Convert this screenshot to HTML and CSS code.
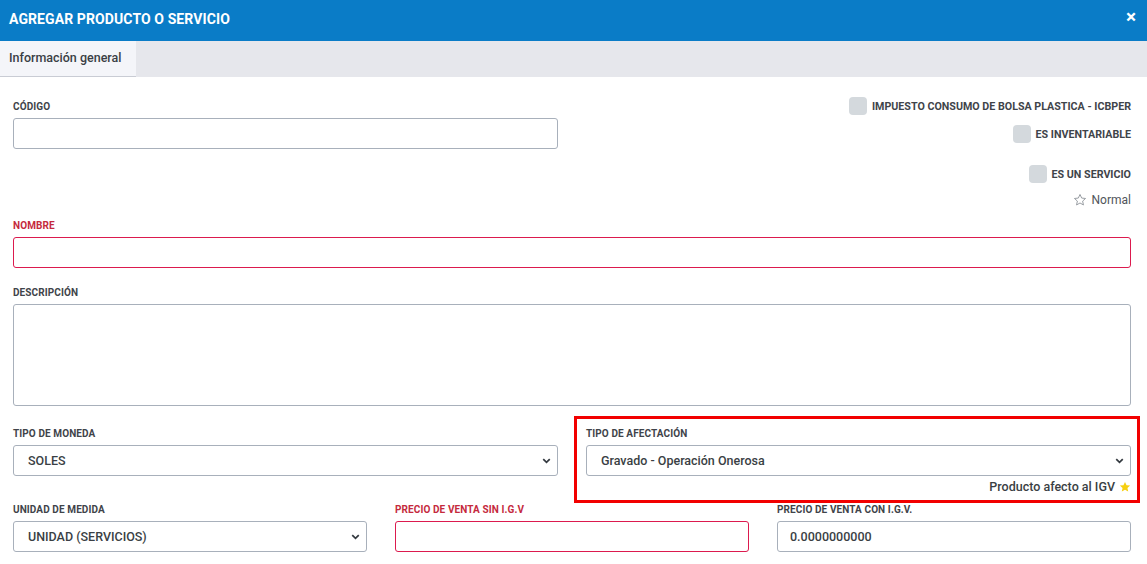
FILE: index.html
```html
<!DOCTYPE html>
<html lang="es">
<head>
    <meta charset="UTF-8">
    <title>Agregar producto o servicio</title>
    <link rel="stylesheet" href="styles.css">
</head>
<body>
    <div class="modal-header">
        <span class="modal-title">AGREGAR PRODUCTO O SERVICIO</span>
        <span class="close">&times;</span>
    </div>

    <div class="tabs">
        <div class="tab active">Información general</div>
    </div>

    <div class="form">
        <div class="row row-2 first-row">
            <div class="field">
                <label class="label">CÓDIGO</label>
                <div class="input"></div>
            </div>
            <div class="checks">
                <div class="check check-1"><span class="box"></span>IMPUESTO CONSUMO DE BOLSA PLASTICA - ICBPER</div>
                <div class="check check-2"><span class="box"></span>ES INVENTARIABLE</div>
                <div class="check check-3"><span class="box"></span>ES UN SERVICIO</div>
                <div class="normal">
                    <svg class="star-outline" width="14" height="14" viewBox="0 0 24 24"><path d="M12 2.5l2.9 6.2 6.6.7-5 4.5 1.4 6.6L12 17.1l-5.9 3.4 1.4-6.6-5-4.5 6.6-.7z" fill="none" stroke="#8c9197" stroke-width="1.5" stroke-linejoin="round"/></svg>
                    <span>Normal</span>
                </div>
            </div>
        </div>

        <div class="field nombre">
            <label class="label required">NOMBRE</label>
            <div class="input input-required"></div>
        </div>

        <div class="field descripcion">
            <label class="label">DESCRIPCIÓN</label>
            <div class="input textarea"></div>
        </div>

        <div class="row row-2">
            <div class="field">
                <label class="label">TIPO DE MONEDA</label>
                <div class="input select">
                    <span>SOLES</span>
                    <svg class="chevron" width="9" height="6" viewBox="0 0 10 7"><path d="M1.2 1.3l3.8 3.8 3.8-3.8" fill="none" stroke="#343a40" stroke-width="2"/></svg>
                </div>
            </div>
            <div class="field highlighted">
                <label class="label">TIPO DE AFECTACIÓN</label>
                <div class="input select">
                    <span>Gravado - Operación Onerosa</span>
                    <svg class="chevron" width="9" height="6" viewBox="0 0 10 7"><path d="M1.2 1.3l3.8 3.8 3.8-3.8" fill="none" stroke="#343a40" stroke-width="2"/></svg>
                </div>
                <div class="hint">Producto afecto al IGV
                    <svg class="star" width="12" height="12" viewBox="0 0 24 24"><path d="M12 1.8l3.1 6.6 7.2.8-5.4 4.9 1.5 7.1L12 17.6l-6.4 3.6 1.5-7.1-5.4-4.9 7.2-.8z" fill="#f6cf10"/></svg>
                </div>
            </div>
        </div>

        <div class="row row-3">
            <div class="field">
                <label class="label">UNIDAD DE MEDIDA</label>
                <div class="input select">
                    <span>UNIDAD (SERVICIOS)</span>
                    <svg class="chevron" width="9" height="6" viewBox="0 0 10 7"><path d="M1.2 1.3l3.8 3.8 3.8-3.8" fill="none" stroke="#343a40" stroke-width="2"/></svg>
                </div>
            </div>
            <div class="field">
                <label class="label required">PRECIO DE VENTA SIN I.G.V</label>
                <div class="input input-required"></div>
            </div>
            <div class="field">
                <label class="label">PRECIO DE VENTA CON I.G.V.</label>
                <div class="input value"><span>0.0000000000</span></div>
            </div>
        </div>
    </div>
</body>
</html>
```

FILE: styles.css
```css
body {
    font-family: Roboto, "Liberation Sans", Arial, sans-serif;
    margin: 0;
    padding: 0;
    background-color: #ffffff;
    color: #3c4147;
}

.modal-header {
    height: 41px;
    background-color: #0a7cc7;
    color: white;
    display: flex;
    align-items: center;
    justify-content: space-between;
    padding: 0 11px 0 9px;
    box-sizing: border-box;
}

.modal-title {
    font-size: 14px;
    font-weight: bold;
    letter-spacing: 0.1px;
    margin-top: -4px;
}

.close {
    font-size: 19px;
    font-weight: bold;
    line-height: 1;
    margin-top: -8px;
}

.tabs {
    height: 36px;
    background-color: #e6e7ec;
    display: flex;
}

.tab {
    padding: 0 0 2px 9px;
    font-size: 12.5px;
    font-weight: 500;
    color: #3a3f45;
    display: flex;
    align-items: center;
    box-sizing: border-box;
}

.tab.active {
    background-color: #f4f5f9;
    border-bottom: 1px solid #c9ccd4;
    width: 136px;
}

.form {
    padding: 22px 16px 0 13px;
}

.row {
    display: grid;
    column-gap: 28px;
}

.row-2 {
    grid-template-columns: 1fr 1fr;
}

.row-3 {
    grid-template-columns: 1fr 1fr 1fr;
}

.field {
    margin-bottom: 17px;
}

.label {
    display: block;
    font-size: 10px;
    font-weight: bold;
    line-height: 14px;
    padding-top: 1px;
    margin-bottom: 4px;
    color: #3f444a;
    letter-spacing: 0.1px;
}

.label.required {
    color: #c52a3d;
}

.input {
    height: 31px;
    border: 1px solid #a8b0bb;
    border-radius: 3px;
    box-sizing: border-box;
    padding: 0 14px;
    display: flex;
    align-items: center;
    font-size: 12.5px;
    font-weight: 500;
    color: #3a3f44;
}

.input.value {
    padding-left: 12px;
}

.input-required {
    border-color: #dc1a4e;
}

.textarea {
    height: 102px;
}

.select {
    justify-content: space-between;
    padding-right: 6px;
}

.chevron {
    display: block;
}

.first-row .field {
    margin-bottom: 0;
}

.checks {
    display: flex;
    flex-direction: column;
    align-items: flex-end;
}

.check {
    display: flex;
    align-items: center;
    font-size: 10.7px;
    font-weight: bold;
    color: #3f444a;
    height: 18px;
}

.box {
    width: 18px;
    height: 18px;
    border-radius: 4px;
    background-color: #d4d9dd;
    margin-right: 5px;
}

.check-1 {
    margin-top: -2px;
}

.check-2 {
    margin-top: 10px;
}

.check-3 {
    margin-top: 22px;
}

.normal {
    margin-top: 10px;
    height: 14px;
    display: flex;
    align-items: center;
    font-size: 12px;
    color: #50555b;
}

.star-outline {
    display: block;
    margin-right: 5px;
}

.nombre {
    margin-top: 11px;
}

.descripcion {
    margin-bottom: 20px;
}

.highlighted {
    position: relative;
}

.highlighted::after {
    content: "";
    position: absolute;
    top: -10px;
    left: -12px;
    right: -9px;
    bottom: -9px;
    border: 3px solid #f20000;
    pointer-events: none;
}

.hint {
    display: flex;
    justify-content: flex-end;
    align-items: center;
    gap: 4px;
    font-size: 12.5px;
    font-weight: 500;
    line-height: 14px;
    margin-top: 4px;
    color: #3a3f44;
}

.star {
    display: block;
}

.row-2 + .row-3 {
    margin-top: -9px;
}
```
